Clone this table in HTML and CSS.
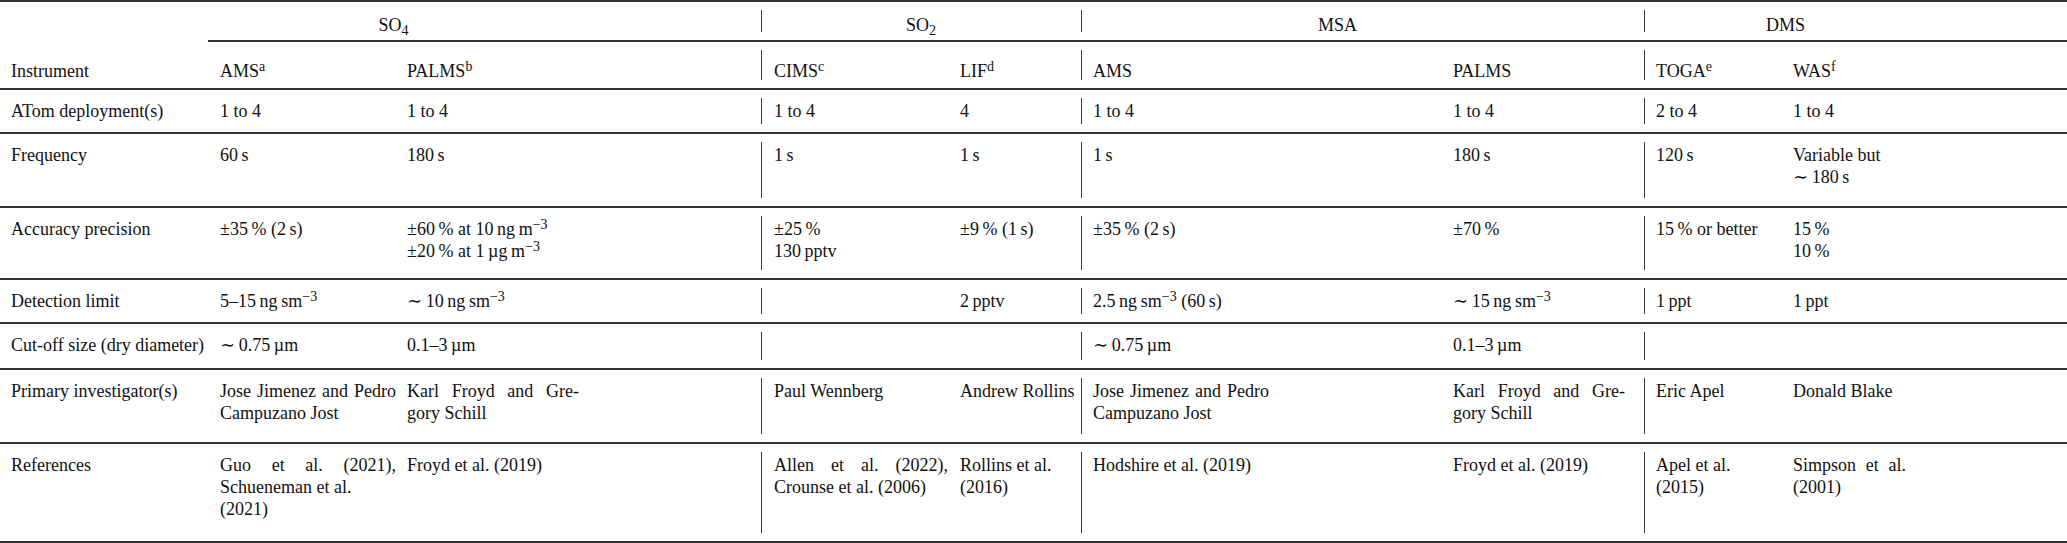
FILE: index.html
```html
<!DOCTYPE html>
<html lang="en">
<head>
    <meta charset="UTF-8">
    <meta name="viewport" content="width=device-width, initial-scale=1.0">
    <title>Sulfur measurements on ATom</title>
    <link rel="stylesheet" href="styles.css">
</head>
<body>
    <table class="specs">
        <colgroup>
            <col class="c-label">
            <col class="c-ams">
            <col class="c-palms">
            <col class="c-cims">
            <col class="c-lif">
            <col class="c-ams2">
            <col class="c-palms2">
            <col class="c-toga">
            <col class="c-was">
        </colgroup>
        <thead>
            <tr class="groups">
                <th class="corner"></th>
                <th colspan="2" class="group g-so4">SO<sub>4</sub></th>
                <th colspan="2" class="group sep">SO<sub>2</sub></th>
                <th colspan="2" class="group sep g-msa">MSA</th>
                <th colspan="2" class="group sep g-dms">DMS</th>
            </tr>
            <tr class="cols">
                <th>Instrument</th>
                <th>AMS<sup>a</sup></th>
                <th>PALMS<sup>b</sup></th>
                <th class="sep">CIMS<sup>c</sup></th>
                <th>LIF<sup>d</sup></th>
                <th class="sep">AMS</th>
                <th>PALMS</th>
                <th class="sep">TOGA<sup>e</sup></th>
                <th>WAS<sup>f</sup></th>
            </tr>
        </thead>
        <tbody>
            <tr class="h44">
                <td>ATom deployment(s)</td>
                <td>1 to 4</td>
                <td>1 to 4</td>
                <td class="sep">1 to 4</td>
                <td>4</td>
                <td class="sep">1 to 4</td>
                <td>1 to 4</td>
                <td class="sep">2 to 4</td>
                <td>1 to 4</td>
            </tr>
            <tr class="h74">
                <td>Frequency</td>
                <td><span class="nw">60&#8201;s</span></td>
                <td><span class="nw">180&#8201;s</span></td>
                <td class="sep"><span class="nw">1&#8201;s</span></td>
                <td><span class="nw">1&#8201;s</span></td>
                <td class="sep"><span class="nw">1&#8201;s</span></td>
                <td><span class="nw">180&#8201;s</span></td>
                <td class="sep"><span class="nw">120&#8201;s</span></td>
                <td>Variable but<br><span class="nw">&#8764;&#8201;180&#8201;s</span></td>
            </tr>
            <tr class="h72">
                <td>Accuracy precision</td>
                <td><span class="nw">&plusmn;35&#8201;% (2&#8201;s)</span></td>
                <td><span class="nw">&plusmn;60&#8201;% at 10&#8201;ng&#8201;m<sup>&minus;3</sup></span><br><span class="nw">&plusmn;20&#8201;% at 1&#8201;&micro;g&#8201;m<sup>&minus;3</sup></span></td>
                <td class="sep"><span class="nw">&plusmn;25&#8201;%</span><br><span class="nw">130&#8201;pptv</span></td>
                <td><span class="nw">&plusmn;9&#8201;% (1&#8201;s)</span></td>
                <td class="sep"><span class="nw">&plusmn;35&#8201;% (2&#8201;s)</span></td>
                <td><span class="nw">&plusmn;70&#8201;%</span></td>
                <td class="sep"><span class="nw">15&#8201;% or better</span></td>
                <td><span class="nw">15&#8201;%</span><br><span class="nw">10&#8201;%</span></td>
            </tr>
            <tr class="h44">
                <td>Detection limit</td>
                <td><span class="nw">5&ndash;15&#8201;ng&#8201;sm<sup>&minus;3</sup></span></td>
                <td><span class="nw">&#8764;&#8201;10&#8201;ng&#8201;sm<sup>&minus;3</sup></span></td>
                <td class="sep"></td>
                <td><span class="nw">2&#8201;pptv</span></td>
                <td class="sep"><span class="nw">2.5&#8201;ng&#8201;sm<sup>&minus;3</sup> (60&#8201;s)</span></td>
                <td><span class="nw">&#8764;&#8201;15&#8201;ng&#8201;sm<sup>&minus;3</sup></span></td>
                <td class="sep"><span class="nw">1&#8201;ppt</span></td>
                <td><span class="nw">1&#8201;ppt</span></td>
            </tr>
            <tr class="h46">
                <td>Cut-off size (dry diameter)</td>
                <td><span class="nw">&#8764;&#8201;0.75&#8201;&micro;m</span></td>
                <td><span class="nw">0.1&ndash;3&#8201;&micro;m</span></td>
                <td class="sep"></td>
                <td></td>
                <td class="sep"><span class="nw">&#8764;&#8201;0.75&#8201;&micro;m</span></td>
                <td><span class="nw">0.1&ndash;3&#8201;&micro;m</span></td>
                <td class="sep"></td>
                <td></td>
            </tr>
            <tr class="h74">
                <td>Primary investigator(s)</td>
                <td>Jose Jimenez and Pedro Campuzano Jost</td>
                <td>Karl Froyd and Gre&shy;gory Schill</td>
                <td class="sep">Paul Wennberg</td>
                <td>Andrew Rollins</td>
                <td class="sep">Jose Jimenez and Pedro Campuzano Jost</td>
                <td>Karl Froyd and Gre&shy;gory Schill</td>
                <td class="sep">Eric Apel</td>
                <td>Donald Blake</td>
            </tr>
            <tr class="h99">
                <td>References</td>
                <td>Guo et al. (2021), Schueneman et al.<br>(2021)</td>
                <td>Froyd et al. (2019)</td>
                <td class="sep">Allen et al. (2022), Crounse et al. (2006)</td>
                <td>Rollins et al.<br>(2016)</td>
                <td class="sep">Hodshire et al. (2019)</td>
                <td>Froyd et al. (2019)</td>
                <td class="sep">Apel et al.<br>(2015)</td>
                <td>Simpson et al. (2001)</td>
            </tr>
        </tbody>
    </table>
</body>
</html>
```

FILE: styles.css
```css
body {
    margin: 0;
    background: #fff;
    color: #111;
    font-family: "Liberation Serif", "Times New Roman", "DejaVu Serif", serif;
    font-size: 18px;
}
.specs {
    width: 2067px;
    table-layout: fixed;
    border-collapse: separate;
    border-spacing: 0;
    border-top: 2px solid #333;
}
.c-label { width: 208px; }
.c-ams { width: 193px; }
.c-palms { width: 360px; }
.c-cims { width: 193px; }
.c-lif { width: 127px; }
.c-ams2 { width: 366px; }
.c-palms2 { width: 197px; }
.c-toga { width: 143px; }
.c-was { width: 280px; }

.specs th,
.specs td {
    font-weight: normal;
    text-align: justify;
    vertical-align: top;
    line-height: 22px;
    padding: 10px 0 0;
    border-bottom: 2px solid #333;
    hyphens: manual;
}
.specs .sep {
    background: linear-gradient(#3a3a3a, #3a3a3a) no-repeat 0 8px / 1px calc(100% - 16px);
}
.nw {
    white-space: nowrap;
}
.specs sup {
    font-size: 0.78em;
    line-height: 0;
    vertical-align: 0.45em;
}
.specs sub {
    font-size: 0.78em;
    line-height: 0;
    vertical-align: -0.3em;
}

/* header */
.groups {
    height: 40px;
}
.groups th {
    padding-top: 12px;
}
.groups .corner {
    border-bottom: none;
}
.groups .group {
    text-align: center;
}
.groups .g-so4 { padding-right: 182px; }
.groups .g-msa { padding-right: 50px; }
.groups .g-dms { padding-right: 140px; }
.cols {
    height: 48px;
}
.cols th {
    padding-top: 18px;
    text-align: left;
}

/* row heights */
.h44 { height: 44px; }
.h46 { height: 46px; }
.h72 { height: 72px; }
.h74 { height: 74px; }
.h99 { height: 99px; }

/* column insets */
.cols > :nth-child(1), tbody td:nth-child(1) { padding-left: 11px; }
.cols > :nth-child(2), tbody td:nth-child(2) { padding-left: 12px; padding-right: 5px; }
.cols > :nth-child(3), tbody td:nth-child(3) { padding-left: 6px; padding-right: 182px; }
.cols > :nth-child(4), tbody td:nth-child(4) { padding-left: 13px; padding-right: 6px; }
.cols > :nth-child(5), tbody td:nth-child(5) { padding-left: 6px; padding-right: 5px; }
.cols > :nth-child(6), tbody td:nth-child(6) { padding-left: 12px; padding-right: 178px; }
.cols > :nth-child(7), tbody td:nth-child(7) { padding-left: 6px; padding-right: 19px; }
.cols > :nth-child(8), tbody td:nth-child(8) { padding-left: 12px; padding-right: 11px; }
.cols > :nth-child(9), tbody td:nth-child(9) { padding-left: 6px; padding-right: 161px; }
```
